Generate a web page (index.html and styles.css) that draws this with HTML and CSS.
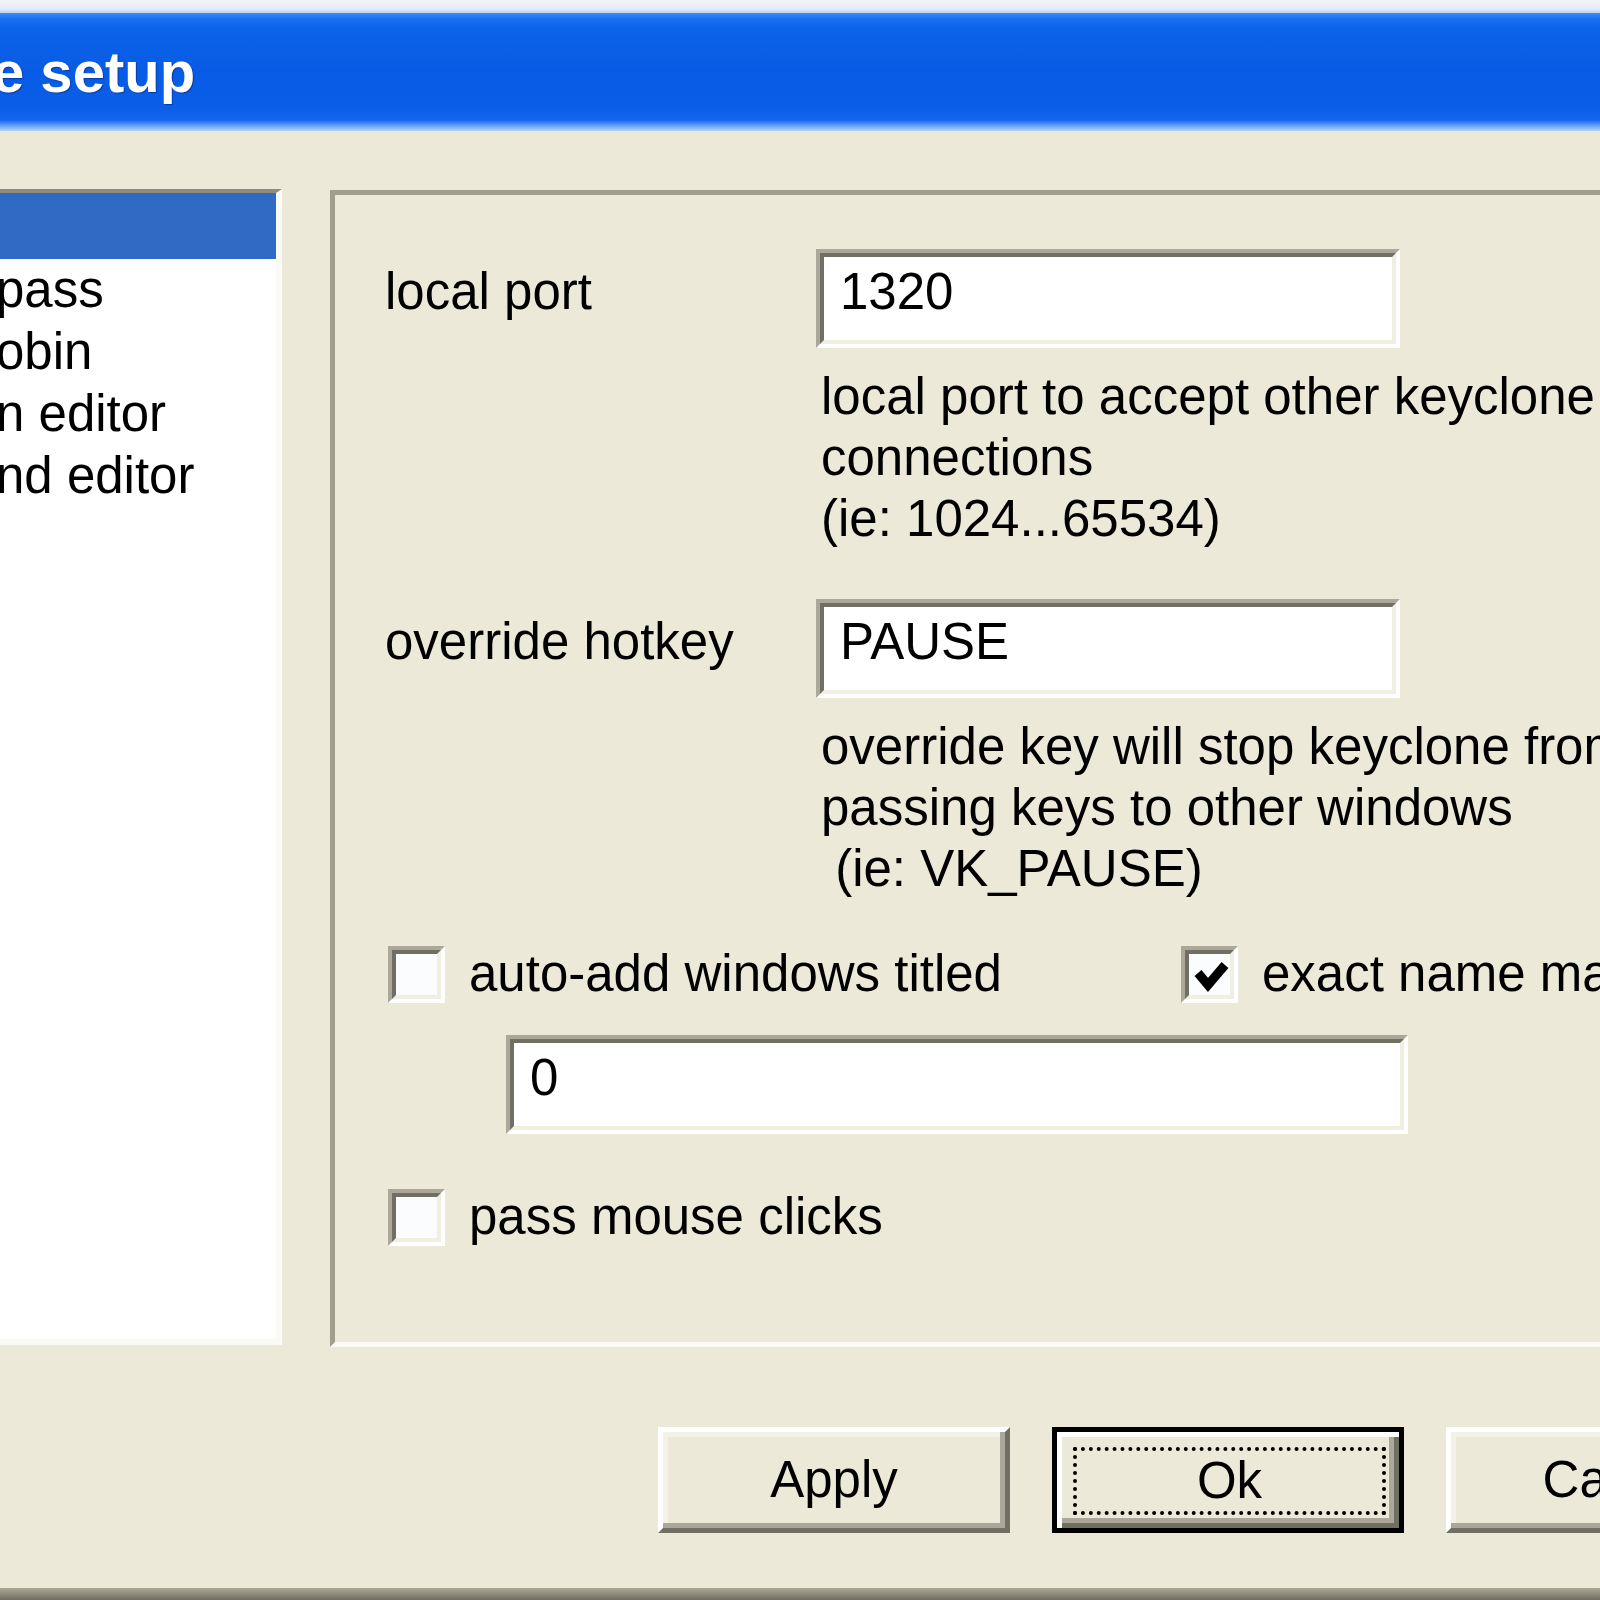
FILE: index.html
```html
<!DOCTYPE html>
<html>
<head>
<meta charset="utf-8">
<title>keyclone setup</title>
<link rel="stylesheet" href="styles.css">
</head>
<body>
<div class="top"></div>
<div class="titlebar"><span class="title-text">keyclone setup</span></div>
<div class="main">
  <div class="list">
    <div class="item sel">&nbsp;</div>
    <div class="item">pass</div>
    <div class="item">obin</div>
    <div class="item">n editor</div>
    <div class="item">nd editor</div>
  </div>
  <div class="panel">
    <div class="row r1">
      <div class="label">local port</div>
      <div class="fieldcol">
        <div class="field"><div class="field-in">1320</div></div>
        <div class="help">local port to accept other keyclone<br>connections<br>(ie: 1024...65534)</div>
      </div>
    </div>
    <div class="row r2">
      <div class="label">override hotkey</div>
      <div class="fieldcol">
        <div class="field"><div class="field-in">PAUSE</div></div>
        <div class="help">override key will stop keyclone from<br>passing keys to other windows<br> (ie: VK_PAUSE)</div>
      </div>
    </div>
    <div class="checks">
      <div class="cb-item first">
        <div class="cb"><div class="cb-in"></div></div>
        <span>auto-add windows titled</span>
      </div>
      <div class="cb-item">
        <div class="cb"><div class="cb-in">
          <svg width="41" height="41" viewBox="0 0 41 41"><polyline points="9,19 19,31 36,11" fill="none" stroke="#000" stroke-width="9" stroke-linejoin="miter"/></svg>
        </div></div>
        <span>exact name match</span>
      </div>
    </div>
    <div class="field wide"><div class="field-in">0</div></div>
    <div class="checks last">
      <div class="cb-item">
        <div class="cb"><div class="cb-in"></div></div>
        <span>pass mouse clicks</span>
      </div>
    </div>
  </div>
</div>
<div class="buttons">
  <div class="btn">Apply</div>
  <div class="btn default"><div class="focus">Ok</div></div>
  <div class="btn">Cancel</div>
</div>
<div class="bottom"></div>
</body>
</html>
```

FILE: styles.css
```css
html, body {
  margin: 0;
  padding: 0;
  width: 1600px;
  height: 1600px;
  overflow: hidden;
}
body {
  background: #ece9d8;
  font-family: "Liberation Sans", Arial, sans-serif;
  font-size: 51px;
  line-height: 62px;
  color: #000;
}
.top {
  height: 13px;
  background: linear-gradient(#f3f4f6, #e6ecf5 9px, #b7d0f3 13px);
}
.titlebar {
  height: 118px;
  background: linear-gradient(to bottom, #3d8cf8 0, #1a6ef0 6px, #0c62ea 16px, #085be4 60px, #0a5ee8 95px, #1466ee 107px, #5c9af4 112px, #b5d3f6 118px);
  display: flex;
  align-items: center;
  overflow: hidden;
  white-space: nowrap;
}
.title-text {
  margin-left: -224px;
  font-weight: bold;
  font-size: 58px;
  line-height: 118px;
  color: #fff;
  text-shadow: 1px 1px 1px rgba(0, 20, 90, 0.45);
}
.main {
  display: flex;
  align-items: flex-start;
  padding-top: 58px;
}
.list {
  flex: none;
  margin-left: -10px;
  width: 292px;
  height: 1156px;
  box-sizing: border-box;
  background: #fff;
  border-top: 4px solid #8d8b7f;
  border-left: 4px solid #8d8b7f;
  border-right: 6px solid #f9f9f5;
  border-bottom: 6px solid #f9f9f5;
  overflow: hidden;
  white-space: nowrap;
}
.item {
  height: 62px;
  padding-left: 2px;
}
.item.sel {
  height: 66px;
  background: #316ac5;
  color: #fff;
}
.panel {
  flex: none;
  margin-left: 48px;
  margin-top: 1px;
  width: 1400px;
  height: 1157px;
  box-sizing: border-box;
  border: 5px solid;
  border-color: #a19e8f #fbfaf4 #fbfaf4 #a19e8f;
  white-space: nowrap;
}
.row {
  display: flex;
  align-items: baseline;
}
.r1 { margin-top: 54px; }
.r2 { margin-top: 50px; }
.label {
  flex: none;
  width: 431px;
  padding-left: 50px;
}
.fieldcol {
  display: flex;
  flex-direction: column;
}
.field {
  flex: none;
  width: 584px;
  height: 99px;
  box-sizing: border-box;
  border: 4px solid;
  border-color: #aca899 #ffffff #ffffff #aca899;
  background: #fff;
}
.field-in {
  height: 100%;
  box-sizing: border-box;
  border: 4px solid;
  border-color: #716f64 #f1efe2 #f1efe2 #716f64;
  padding: 4px 0 0 16px;
}
.field.wide {
  width: 902px;
  margin-left: 171px;
  margin-top: 30px;
}
.help {
  margin-top: 18px;
  padding-left: 5px;
  line-height: 61px;
  white-space: pre;
}
.checks {
  display: flex;
  align-items: center;
  height: 62px;
  margin-top: 44px;
  margin-left: 53px;
}
.checks.last { margin-top: 52px; }
.cb-item {
  display: flex;
  align-items: center;
  gap: 24px;
}
.cb-item.first { width: 793px; flex: none; }
.cb {
  flex: none;
  width: 57px;
  height: 57px;
  box-sizing: border-box;
  border: 4px solid;
  border-color: #aca899 #ffffff #ffffff #aca899;
  background: #fff;
}
.cb-in {
  width: 100%;
  height: 100%;
  box-sizing: border-box;
  border: 4px solid;
  border-color: #716f64 #f1efe2 #f1efe2 #716f64;
  background: #fbfcfe;
}
.cb-in svg { display: block; }
.buttons {
  display: flex;
  gap: 42px;
  padding-left: 658px;
  margin-top: 80px;
}
.btn {
  flex: none;
  width: 352px;
  height: 106px;
  box-sizing: border-box;
  display: flex;
  align-items: center;
  justify-content: center;
  border: 5px solid;
  border-color: #ffffff #716f64 #716f64 #ffffff;
  box-shadow: inset -5px -5px 0 #aca899, inset 5px 5px 0 #f4f2e8;
  background: #ece9d8;
}
.btn.default {
  border: 5px solid #000;
  box-shadow: inset 5px 5px 0 #ffffff, inset -5px -5px 0 #716f64, inset -10px -10px 0 #aca899;
  padding: 15px 13px 13px 16px;
  align-items: stretch;
}
.focus {
  flex: 1;
  border: 4px dotted #000;
  display: flex;
  align-items: center;
  justify-content: center;
}
.bottom {
  margin-top: 55px;
  height: 12px;
  background: linear-gradient(#aaa896, #6f6d60);
}
```
